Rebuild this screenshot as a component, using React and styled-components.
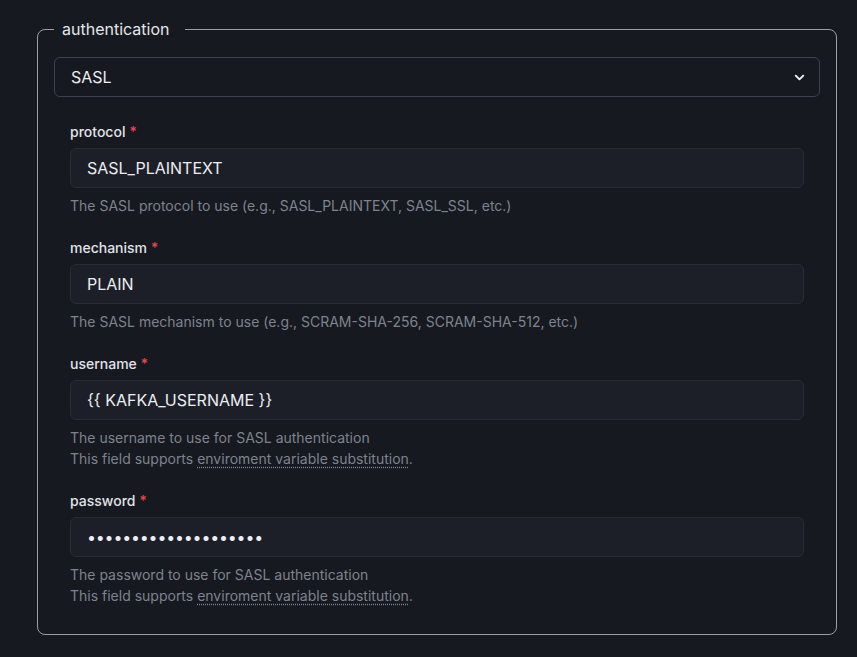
import React from 'react';
import styled, { createGlobalStyle } from 'styled-components';

const GlobalStyle = createGlobalStyle`
  html, body {
    margin: 0;
    background: #161920;
    font-family: Inter, 'Noto Sans', sans-serif;
  }
`;

const Page = styled.div`
  min-height: 657px;
  box-sizing: border-box;
  padding: 17px 20px 0 37px;
  background: #161920;
`;

const Fieldset = styled.fieldset`
  box-sizing: border-box;
  width: 800px;
  margin: 0;
  padding: 16px 16px 16px;
  border: 1px solid #9b9ea5;
  border-radius: 8px;
`;

const Legend = styled.legend`
  padding: 0 16px 0 8px;
  font-size: 16px;
  line-height: 24px;
  color: #e4e6ea;
`;

const SelectBox = styled.div`
  display: flex;
  align-items: center;
  justify-content: space-between;
  height: 40px;
  box-sizing: border-box;
  padding: 0 12px 0 16px;
  border: 1px solid #3d424d;
  border-radius: 6px;
  background: #161920;
  color: #eceef1;
  font-size: 16px;
`;

const Section = styled.div`
  display: flex;
  flex-direction: column;
  gap: 22px;
  padding: 25px 16px 12px;
`;

const Field = styled.div`
  display: flex;
  flex-direction: column;
`;

const Label = styled.label`
  font-size: 14px;
  line-height: 20px;
  font-weight: 500;
  color: #e1e3e8;
  margin-bottom: 6px;

  span {
    color: #e5484d;
    margin-left: 4px;
  }
`;

const Input = styled.input`
  box-sizing: border-box;
  height: 40px;
  width: 100%;
  padding: 0 16px;
  border: 1px solid #272c36;
  border-radius: 6px;
  background: #1c1f28;
  color: #eceef1;
  font-family: inherit;
  font-size: 16px;
  outline: none;
  letter-spacing: ${(p) => (p.type === 'password' ? '-0.2px' : 'normal')};
`;

const Help = styled.div`
  margin-top: 7px;
  font-size: 14px;
  line-height: 21px;
  color: #7e838e;
`;

const DocLink = styled.a`
  color: #7e838e;
  text-decoration: underline dotted;
  text-underline-offset: 3px;
`;

const Chevron = () => (
  <svg width="15" height="15" viewBox="0 0 24 24" fill="none" stroke="#f2f3f5" strokeWidth="3" strokeLinecap="round" strokeLinejoin="round">
    <path d="M6 9l6 6 6-6" />
  </svg>
);

const fields = [
  { name: 'protocol', value: 'SASL_PLAINTEXT', help: 'The SASL protocol to use (e.g., SASL_PLAINTEXT, SASL_SSL, etc.)' },
  { name: 'mechanism', value: 'PLAIN', help: 'The SASL mechanism to use (e.g., SCRAM-SHA-256, SCRAM-SHA-512, etc.)' },
  { name: 'username', value: '{{ KAFKA_USERNAME }}', help: 'The username to use for SASL authentication', env: true },
  { name: 'password', value: 'xxxxxxxxxxxxxxxxxxxx', type: 'password', help: 'The password to use for SASL authentication', env: true },
];

export default function App() {
  return (
    <Page>
      <GlobalStyle />
      <Fieldset>
        <Legend>authentication</Legend>
        <SelectBox>
          SASL
          <Chevron />
        </SelectBox>
        <Section>
          {fields.map((f) => (
            <Field key={f.name}>
              <Label>
                {f.name}
                <span>*</span>
              </Label>
              <Input type={f.type || 'text'} defaultValue={f.value} />
              <Help>
                {f.help}
                {f.env && (
                  <div>
                    This field supports <DocLink>enviroment variable substitution</DocLink>.
                  </div>
                )}
              </Help>
            </Field>
          ))}
        </Section>
      </Fieldset>
    </Page>
  );
}
